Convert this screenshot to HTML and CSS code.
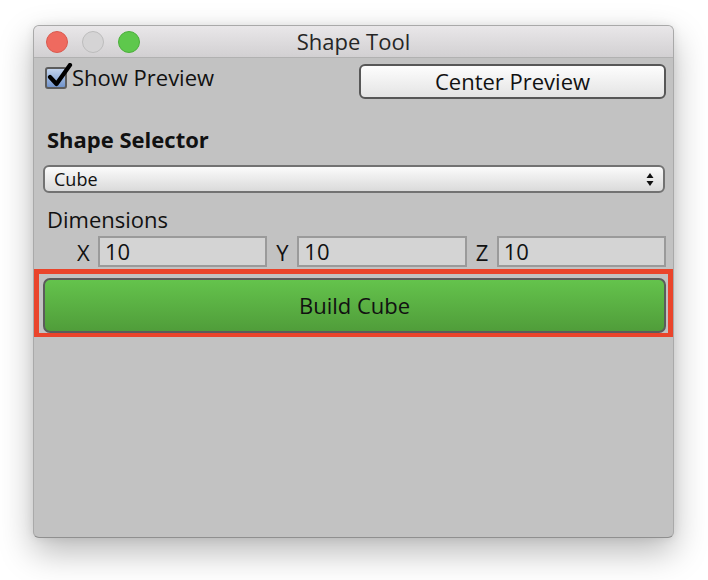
FILE: index.html
```html
<!DOCTYPE html>
<html>
<head>
<meta charset="utf-8">
<link rel="stylesheet" href="styles.css">
</head>
<body>
<div class="window">
  <div class="titlebar">
    <div class="lights">
      <span class="light red"></span>
      <span class="light gray"></span>
      <span class="light green"></span>
    </div>
    <div class="title">Shape Tool</div>
    <div class="spacer"></div>
  </div>
  <div class="content">
    <div class="row-top">
      <label class="check">
        <span class="box">
          <svg class="tick" width="26" height="26" viewBox="0 0 26 26"><path d="M3 14 L9.5 21 L23 2" fill="none" stroke="#000" stroke-width="4.2" stroke-linecap="round" stroke-linejoin="round"/></svg>
        </span>
        <span class="check-text">Show Preview</span>
      </label>
      <div class="btn center-btn">Center Preview</div>
    </div>
    <div class="heading">Shape Selector</div>
    <div class="dropdown">
      <span class="dd-text">Cube</span>
      <svg class="dd-arrows" width="8" height="13" viewBox="0 0 8 13"><path d="M4 0 L7.5 5 L0.5 5 Z" fill="#111"/><path d="M4 13 L7.5 8 L0.5 8 Z" fill="#111"/></svg>
    </div>
    <div class="label">Dimensions</div>
    <div class="dims">
      <div class="dim"><span class="dim-label">X</span><div class="field">10</div></div>
      <div class="dim"><span class="dim-label">Y</span><div class="field">10</div></div>
      <div class="dim"><span class="dim-label">Z</span><div class="field">10</div></div>
    </div>
    <div class="highlight">
      <div class="build-btn">Build Cube</div>
    </div>
  </div>
</div>
</body>
</html>
```
FILE: styles.css
```css
* { box-sizing: border-box; }
html, body { margin: 0; padding: 0; background: #ffffff; }
body {
  font-family: "Open Sans", "DejaVu Sans", sans-serif;
  font-size: 22px;
  color: #111;
  width: 708px;
  height: 580px;
  overflow: hidden;
}
.window {
  margin: 25px 0 0 33px;
  width: 641px;
  height: 513px;
  background: #c2c2c2;
  border: 1px solid #a9a9a9;
  border-bottom-color: #8f8f8f;
  border-radius: 6px;
  box-shadow: 0 14px 34px rgba(0,0,0,0.28), 0 0 10px rgba(0,0,0,0.08);
  overflow: hidden;
}
.titlebar {
  height: 32px;
  display: grid;
  grid-template-columns: 1fr auto 1fr;
  align-items: center;
  background: linear-gradient(#e9e7e9, #d2d0d2);
  border-bottom: 1px solid #b1b1b1;
}
.lights {
  display: flex;
  gap: 14px;
  padding-left: 12px;
}
.light {
  width: 22px;
  height: 22px;
  border-radius: 50%;
  display: block;
}
.light.red { background: #ef6a5f; border: 1px solid #d95a4f; }
.light.gray { background: #d5d4d5; border: 1px solid #bcbcbc; }
.light.green { background: #5ec84c; border: 1px solid #4caf3c; }
.title {
  font-size: 22px;
  line-height: 31px;
  color: #262626;
}
.content {
  padding: 0 7px 0 9px;
}
.row-top {
  margin-top: 6px;
  display: flex;
  justify-content: space-between;
  align-items: flex-start;
}
.check {
  display: flex;
  align-items: flex-start;
  line-height: 26px;
}
.box {
  position: relative;
  margin: 3px 0 0 2px;
  width: 22px;
  height: 22px;
  border: 2px solid #5c5c5c;
  border-radius: 3px;
  background: linear-gradient(#c2d4ee, #7194cb);
}
.tick {
  position: absolute;
  left: 0px;
  top: -6px;
}
.check-text {
  margin-left: 5px;
}
.btn {
  display: flex;
  align-items: center;
  justify-content: center;
}
.center-btn {
  width: 307px;
  height: 35px;
  border: 2px solid #575757;
  border-radius: 6px;
  background: linear-gradient(#fdfdfd, #e4e4e4);
  padding-bottom: 1px;
}
.heading {
  margin-top: 27px;
  font-weight: bold;
  line-height: 26px;
  padding-left: 4px;
}
.dropdown {
  margin-top: 13px;
  height: 28px;
  width: 622px;
  border: 2px solid #727272;
  border-radius: 6px;
  background: linear-gradient(#fbfbfb, #dadada);
  display: flex;
  align-items: center;
  justify-content: space-between;
  padding: 0 9px 0 9px;
}
.dd-text {
  font-size: 18px;
  line-height: 24px;
}
.label {
  margin-top: 13px;
  line-height: 26px;
  padding-left: 4px;
}
.dims {
  margin-top: 4px;
  margin-left: 34px;
  display: grid;
  grid-template-columns: 1fr 1fr 1fr;
  column-gap: 9px;
}
.dim {
  display: grid;
  grid-template-columns: 12px 1fr;
  column-gap: 9px;
  align-items: center;
}
.dim-label {
  line-height: 26px;
}
.field {
  height: 31px;
  border: 2px solid #9a9a9a;
  background: #d4d4d4;
  padding-left: 5px;
  line-height: 27px;
}
.highlight {
  margin: 2px -7px 0 -9px;
  border: 5px solid #ea442b;
  border-bottom-width: 4px;
  padding: 4px 2px 0 4px;
}
.build-btn {
  height: 55px;
  border: 2px solid #5b5b5b;
  border-radius: 7px;
  background: linear-gradient(#64c34c, #509d3a);
  display: flex;
  align-items: center;
  justify-content: center;
  padding-bottom: 2px;
}
```
